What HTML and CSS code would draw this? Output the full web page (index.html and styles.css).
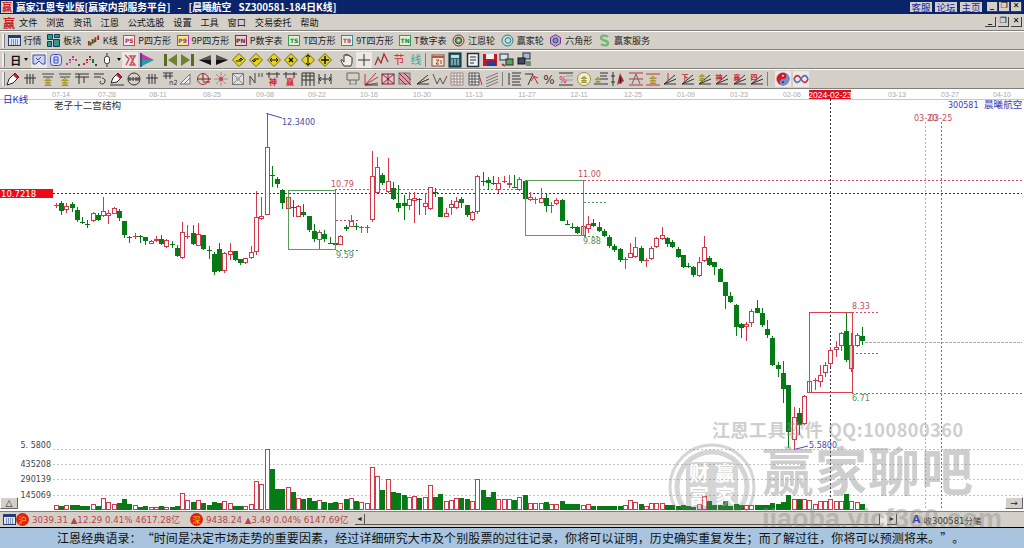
FILE: index.html
```html
<!DOCTYPE html>
<html lang="zh-CN">
<head>
  <meta charset="UTF-8">
  <title>赢家江恩专业版</title>
  <link rel="stylesheet" href="styles.css">
</head>
<body>
<svg class="defs" width="0" height="0">
  <symbol id="dia" viewBox="0 0 16 16"><path d="M8 1.5l6.5 6.5-6.5 6.5-6.5-6.5z" fill="#e6d422" stroke="#6d6a10"/></symbol>
  <symbol id="grate" viewBox="0 0 16 16"><path d="M2 7h12M5 3v10M8 3v10M11 3v10" stroke="#333" fill="none"/></symbol>
  <symbol id="fan" viewBox="0 0 16 16"><path d="M2 13h12M2 13l11-9M2 13l12-5" stroke="#333" fill="none"/></symbol>
</svg>
<div class="app">
  <div class="titlebar">
    <b class="logo-small">赢</b>
    <span class="title">赢家江恩专业版[赢家内部服务平台] - [晨曦航空 SZ300581-184日K线]</span>
    <span class="links"><a>客服</a><a>论坛</a><a>主页</a></span>
    <span class="winbtns"><i>_</i><i>❐</i><i>✕</i></span>
  </div>
  <div class="menubar">
    <b class="logo-menu">赢</b>
    <span>文件</span><span>浏览</span><span>资讯</span><span>江恩</span><span>公式选股</span><span>设置</span><span>工具</span><span>窗口</span><span>交易委托</span><span>帮助</span>
    <span class="winbtns inner"><i>_</i><i>❐</i><i>✕</i></span>
  </div>

  <div class="tools row1">
    <div class="grip"></div>
    <div class="tool"><svg class="ic13" viewBox="0 0 13 13"><rect x=".5" y="1.5" width="12" height="10" fill="#dfe6f5" stroke="#223a7a"/><path d="M1 3h11" stroke="#223a7a" stroke-width="2"/><path d="M3 6h7M3 8h7M3 10h7" stroke="#223a7a" stroke-dasharray="1 1"/></svg>行情</div>
    <div class="tool"><svg class="ic13" viewBox="0 0 13 13"><path d="M.5.5h5v5h-5zM7.5.5h5v3h-5zM.5 7.5h4v5h-4zM6.5 5.5h6v7h-6z" fill="#2f9a8a" stroke="#123a5a"/></svg>板块</div>
    <div class="tool"><svg class="ic13" viewBox="0 0 14 13"><path d="M2 7v5M6 5v5M9 3v5M12 1v5" stroke="#c02020" stroke-width="2"/><path d="M4 8v4M8 6v3" stroke="#108020" stroke-width="2"/></svg>K线</div>
    <div class="tool"><span class="tag red">PS</span>P四方形</div>
    <div class="tool"><span class="tag mag">P9</span>9P四方形</div>
    <div class="tool"><span class="tag dark">PN</span>P数字表</div>
    <div class="tool"><span class="tag grn">TS</span>T四方形</div>
    <div class="tool"><span class="tag teal">T9</span>9T四方形</div>
    <div class="tool"><span class="tag grn">TN</span>T数字表</div>
    <div class="tool"><svg class="ic13" viewBox="0 0 13 13"><circle cx="6.5" cy="6.5" r="5.5" fill="#d8c8b8" stroke="#8a3030"/><circle cx="6.5" cy="6.5" r="3.2" fill="#70a070" stroke="#205020"/><circle cx="6.5" cy="6.5" r="1.2" fill="#d8d8c8"/></svg>江恩轮</div>
    <div class="tool"><svg class="ic13" viewBox="0 0 13 13"><circle cx="6.5" cy="6.5" r="5.5" fill="#bfe0d8" stroke="#2c7a80"/><circle cx="7" cy="6.5" r="2.8" fill="none" stroke="#2c7a80"/></svg>赢家轮</div>
    <div class="tool"><svg class="ic13" viewBox="0 0 13 13"><path d="M6.5.7l5 2.9v5.8l-5 2.9-5-2.9V3.6z" fill="#c8a0d8" stroke="#803090"/><circle cx="6.5" cy="6.5" r="2.5" fill="#60a0b0" stroke="#305070"/></svg>六角形</div>
    <div class="tool"><svg class="ic13" viewBox="0 0 13 13"><path d="M10 3C8 1 3 1 3 4s7 2 7 5-5 3-7 1" fill="none" stroke="#70b870" stroke-width="2.4"/></svg>赢家服务</div>
  </div>

  <div class="tools row2">
    <div class="grip"></div>
    <b class="period">日</b><span class="drop"></span>
    <svg class="ic hi first" viewBox="0 0 16 16"><path d="M2 3h12v9h-3l-3-3-3 3H2z" fill="#c8d4f0" stroke="#3a50b0"/><path d="M5 6l2 2 3-3" stroke="#3a50b0" fill="none"/></svg>
    <svg class="ic" viewBox="0 0 16 16"><rect x="2.500" y="2.500" width="11" height="11" rx="3" fill="#d8e0f8" stroke="#4050c0"/><path d="M6 5h4v6H6zM6 8h4" stroke="#4050c0" fill="none"/></svg>
    <svg class="ic" viewBox="0 0 16 16"><path d="M2 11v3M5 7v4M8 4v4M11 7v3" stroke="#b040a0" stroke-width="2" stroke-dasharray="2 1"/><path d="M13 12h2v2h-2z" fill="#406030"/></svg>
    <svg class="ic" viewBox="0 0 16 16"><path d="M2 11v3M5 7v4M8 4v4" stroke="#c02040" stroke-width="2" stroke-dasharray="2 1"/><path d="M11 7v4" stroke="#207030" stroke-width="2"/><path d="M13 12h2v2h-2z" fill="#404040"/></svg>
    <svg class="ic" viewBox="0 0 16 16"><path d="M8 1v14" stroke="#333"/><rect x="5.500" y="4.500" width="5" height="7" rx="2" fill="#fff" stroke="#333"/></svg>
    <span class="drop tight"></span>
    <svg class="ic hi" viewBox="0 0 16 16"><path d="M3 3l4 4-3 6M8 4h5l-3 5 3 4H8l3-5z" fill="none" stroke="#d05060" stroke-width="1.500"/></svg>
    <svg class="ic" viewBox="0 0 16 16"><path d="M2 1v14" stroke="#405080" stroke-width="2"/><path d="M3 2l12 6H3z" fill="#d030b0"/><path d="M3 8h12L3 14z" fill="#20a0a0"/></svg>
    <span class="gap s5"></span>
    <svg class="ic" viewBox="0 0 16 16"><path d="M2 2h3v12H2z" fill="#5a6a20"/><path d="M15 2v12L6 8z" fill="#6f8230"/></svg>
    <svg class="ic" viewBox="0 0 16 16"><path d="M1 2v12l9-6z" fill="#6f8230"/><path d="M11 2h3v12h-3z" fill="#5a6a20"/></svg>
    <svg class="ic" viewBox="0 0 16 16"><path d="M14 3v10L2 8z" fill="#555"/><path d="M14 8v5L2 8z" fill="#111"/></svg>
    <svg class="ic" viewBox="0 0 16 16"><path d="M2 3v10l12-5z" fill="#111"/><path d="M2 3v5h12z" fill="#555"/></svg>
    <svg class="ic" viewBox="0 0 16 16"><use href="#dia"/><path d="M5 9h5V6M8 8l2-2 2 2" stroke="#111" fill="none"/></svg>
    <svg class="ic" viewBox="0 0 16 16"><use href="#dia"/><path d="M11 7H6v3M4 8l2 2 2-2" stroke="#111" fill="none"/></svg>
    <svg class="ic" viewBox="0 0 16 16"><use href="#dia"/><path d="M4 8h8M6 6L4 8l2 2M10 6l2 2-2 2" stroke="#111" fill="none"/></svg>
    <svg class="ic" viewBox="0 0 16 16"><use href="#dia"/><path d="M6 6l4 4M10 6l-4 4" stroke="#111" stroke-width="1.500"/></svg>
    <svg class="ic" viewBox="0 0 16 16"><use href="#dia"/><path d="M8 3v10M6 5l2-2 2 2M6 11l2 2 2-2" stroke="#111" fill="none"/></svg>
    <svg class="ic" viewBox="0 0 16 16"><use href="#dia"/><path d="M4 8h8M8 4v8" stroke="#111" stroke-width="1.500"/></svg>
    <span class="gap s4"></span>
    <svg class="ic" viewBox="0 0 16 16"><path d="M5 14c-2-3-3-5-3-6s2 0 3 2V4c0-2 2-2 2 0V3c0-1 2-1 2 0v1c0-1 2-1 2 0v1c1-1 2 0 2 1v4c0 2-1 3-1 4z" fill="#f4f0e8" stroke="#333"/></svg>
    <svg class="ic hi" viewBox="0 0 16 16"><path d="M8 2v12M2 8h12" stroke="#333"/></svg>
    <svg class="ic" viewBox="0 0 16 16"><path d="M1 13l3-7 3 5 3-9 4 8" fill="none" stroke="#c02030" stroke-width="1.300"/><circle cx="4" cy="6" r="1.200" fill="#20a040"/></svg>
    <svg class="ic" viewBox="0 0 16 16"><text x="8" y="12" class="glyph light red">节</text></svg>
    <svg class="ic" viewBox="0 0 16 16"><text x="8" y="12" class="glyph light teal">线</text></svg>
    <span class="gap s4 line"></span>
    <svg class="ic" viewBox="0 0 16 16"><rect x="2" y="3" width="12" height="11" fill="#f4e4d0" stroke="#705040"/><path d="M2 5h12" stroke="#c05040" stroke-width="2"/><path d="M6 8h3l-3 4h3M11 8v4" stroke="#a04030" fill="none"/></svg>
    <svg class="ic" viewBox="0 0 16 16"><rect x="2" y="1" width="12" height="14" fill="#20606a" stroke="#102030"/><path d="M4 3h8v3H4z" fill="#bfe0d8"/><path d="M4 8h2M7 8h2M10 8h2M4 10h2M7 10h2M10 10h2M4 12h2M7 12h2M10 12h2" stroke="#d8e8e0"/></svg>
    <svg class="ic" viewBox="0 0 16 16"><rect x="2.500" y="1.500" width="11" height="13" fill="#eef0f0" stroke="#203040" stroke-width="1.500"/><path d="M5 5h6M5 8h6M5 11h4" stroke="#203040"/></svg>
    <svg class="ic" viewBox="0 0 16 16"><path d="M1 2h14v12H1z" fill="#c01828"/><path d="M4 2h8v5H4z" fill="#f0f0f0"/><path d="M5 9h9v5H5z" fill="#2040a0"/></svg>
    <svg class="ic" viewBox="0 0 16 16"><rect x="1" y="2" width="8" height="6" fill="#d8e0e8" stroke="#203050"/><rect x="7" y="7" width="7" height="6" fill="#60a060" stroke="#203020"/><path d="M3 12l3 2" stroke="#b03030" stroke-width="2"/></svg>
    <svg class="ic" viewBox="0 0 16 16"><rect x="7" y="1" width="7" height="6" fill="#b0b8c8" stroke="#203050"/><rect x="2" y="6" width="7" height="6" fill="#404860" stroke="#101020"/><path d="M10 9h5v5h-5z" fill="#709070"/></svg>
  </div>

  <div class="tools row3">
    <div class="grip"></div>
    <svg class="ic" viewBox="0 0 16 16"><path d="M2 14l2-6 6-6 4 4-6 6z" fill="#fff" stroke="#222"/><path d="M10 2l4 4-2 2-4-4z" fill="#c02030"/></svg>
    <svg class="ic"><use href="#grate"/></svg>
    <svg class="ic" viewBox="0 0 16 16"><path d="M2 3h12M3 6h10" stroke="#444"/><text x="8" y="14" class="glyph gold small">金</text></svg>
    <svg class="ic" viewBox="0 0 16 16"><path d="M2 3h12M3 6h10" stroke="#444"/><text x="8" y="14" class="glyph gold small">金</text></svg>
    <svg class="ic" viewBox="0 0 16 16"><path d="M1 3h14M1 6h14M5 3v10M10 6v6" stroke="#333" fill="none"/></svg>
    <svg class="ic" viewBox="0 0 16 16"><path d="M2 3h10M2 6h7M10 7c4 0 4 6 0 6-2 0-3-2-1-3" stroke="#333" fill="none"/></svg>
    <svg class="ic" viewBox="0 0 16 16"><path d="M2 12l2-5 5-5 4 4-5 5z" fill="#fff" stroke="#222"/><path d="M9 2l4 4-2 2-4-4z" fill="#c02030"/><path d="M1 14h14" stroke="#333"/></svg>
    <svg class="ic" viewBox="0 0 16 16"><circle cx="8" cy="8" r="6" fill="none" stroke="#333"/><path d="M2 8h12M4 6v4M7 6v4M10 6v4M12 6v4" stroke="#333"/></svg>
    <svg class="ic"><use href="#grate"/></svg>
    <svg class="ic" viewBox="0 0 16 16"><path d="M2 2h10M2 5h10M5 2v6M9 2v6" stroke="#333" fill="none"/><text x="8" y="14" class="tiny">n2</text></svg>
    <svg class="ic" viewBox="0 0 16 16"><path d="M2 13L12 3v10zM6 13l6-6" fill="#eee" stroke="#777"/></svg>
    <svg class="ic" viewBox="0 0 16 16"><circle cx="7" cy="8" r="5.500" fill="none" stroke="#b03040"/><path d="M1 8h14M7 2v8M7 11h7" stroke="#802020"/></svg>
    <svg class="ic" viewBox="0 0 16 16"><path d="M8 1v14M1 8h14M3 3l10 10M13 3L3 13" stroke="#b08890"/><circle cx="8" cy="8" r="2" fill="#d04050"/></svg>
    <svg class="ic" viewBox="0 0 16 16"><rect x="2.500" y="2.500" width="11" height="11" fill="#ddd" stroke="#777"/><path d="M3 3l10 10M13 3L3 13" stroke="#888"/><rect x="6" y="6" width="4" height="4" fill="#aaa"/></svg>
    <svg class="ic" viewBox="0 0 16 16"><path d="M2 14V5l5 7V2M11 2v4M14 2v4" stroke="#444" fill="none"/></svg>
    <svg class="ic" viewBox="0 0 16 16"><path d="M1 3h14M4 1v6M12 1v6" stroke="#333"/><text x="8" y="14" class="glyph red small">神</text></svg>
    <svg class="ic" viewBox="0 0 16 16"><path d="M1 3h14M4 1v6M12 1v6" stroke="#333"/><text x="8" y="14" class="glyph red small">赢</text></svg>
    <svg class="ic" viewBox="0 0 16 16"><path d="M2 2h12v7H2zM2 5h12M6 2v13M10 2v13M2 9v6M14 9v6" stroke="#333" fill="none"/></svg>
    <svg class="ic" viewBox="0 0 16 16"><path d="M2 3v10M8 3v10M14 3v10M2 8h12M4 6L2 8l2 2M12 6l2 2-2 2" stroke="#333" fill="none"/></svg>
    <span class="gap s10"></span>
    <svg class="ic" viewBox="0 0 16 16"><path d="M2 2h12v7H2zM5 9v5M11 9v5" fill="none" stroke="#666"/><path d="M4 13h8" stroke="#999"/></svg>
    <svg class="ic" viewBox="0 0 16 16"><path d="M2 14L13 2M2 14L15 6M2 14l13-2M2 14V3" stroke="#c03040" fill="none"/><path d="M2 14h13" stroke="#333"/></svg>
    <svg class="ic" viewBox="0 0 16 16"><rect x="2" y="3" width="12" height="10" fill="#e8c8d0" stroke="#802030"/><path d="M2 3l12 10M14 3L2 13M8 3v10" stroke="#802030"/></svg>
    <svg class="ic" viewBox="0 0 16 16"><rect x="2" y="2" width="11" height="11" fill="#d8a0a8" stroke="#777"/><path d="M2 2l12 12M2 7l7 7M7 2l7 7" stroke="#902030"/></svg>
    <svg class="ic"><use href="#fan"/></svg>
    <svg class="ic" viewBox="0 0 16 16"><path d="M1 3l4 10 3-6 3 6 4-8" stroke="#555" fill="none"/></svg>
    <svg class="ic" viewBox="0 0 16 16"><path d="M2 2h12v12H2zM2 5h12M2 8h12M2 11h12M5 2v12M8 2v12M11 2v12" stroke="#a08888" fill="#eee"/></svg>
    <svg class="ic" viewBox="0 0 16 16"><path d="M2 2h10v12H2zM2 5h10M2 8h10M2 11h10M5 2v12M8 2v12" stroke="#555" fill="#eee"/><path d="M12 4l3 10" stroke="#c03040"/></svg>
    <svg class="ic" viewBox="0 0 16 16"><path d="M2 7l12-5M2 10l12-5M2 13l12-5M2 16l12-5" stroke="#777"/></svg>
    <span class="gap s3 line"></span>
    <svg class="ic" viewBox="0 0 16 16"><path d="M3 2v12M6 2h9M6 5h8M6 8h9M6 11h8M6 14h9" stroke="#333"/></svg>
    <svg class="ic" viewBox="0 0 16 16"><path d="M1 3h8L4 14" stroke="#333" fill="none"/><path d="M9 5l5 2M7 10l3-4 4 7" stroke="#d02030" fill="none"/></svg>
    <svg class="ic" viewBox="0 0 16 16"><text x="8" y="13" class="pct">%</text></svg>
    <svg class="ic" viewBox="0 0 16 16"><path d="M1 2h14M1 14h14" stroke="#333"/><path d="M8 5h7M8 9h7" stroke="#999"/><text x="5" y="12" class="pct red small">%</text></svg>
    <svg class="ic" viewBox="0 0 16 16"><circle cx="8" cy="8" r="6.500" fill="#f0f0d8" stroke="#a09040"/><text x="8" y="11" class="glyph gold tiny2">金</text></svg>
    <svg class="ic" viewBox="0 0 16 16"><path d="M1 13h14M7 2h8M7 5h7M7 8h8" stroke="#333"/><text x="5" y="12" class="glyph gold tiny2">金</text></svg>
    <svg class="ic" viewBox="0 0 16 16"><path d="M3 1v14M1 5h4M1 11h4" stroke="#333"/><path d="M7 14l3-12 4 8z" fill="#c02030"/><path d="M10 6l1 7" stroke="#222"/></svg>
    <svg class="ic" viewBox="0 0 16 16"><path d="M1 2h14M1 14h14M1 8h14" stroke="#c03040"/><path d="M4 13l4-10 4 10" stroke="#666" fill="none"/></svg>
    <svg class="ic" viewBox="0 0 16 16"><path d="M1 3h14M1 14h14" stroke="#c03040"/><text x="8" y="12" class="glyph gold small">金</text></svg>
    <svg class="ic" viewBox="0 0 16 16"><use href="#fan"/><path d="M6 2v8" stroke="#c03040"/></svg>
    <svg class="ic" viewBox="0 0 16 16"><use href="#fan"/><text x="5" y="9" class="glyph red tiny2">下</text></svg>
    <svg class="ic" viewBox="0 0 16 16"><use href="#fan"/><text x="5" y="9" class="glyph gold tiny2">金</text></svg>
    <svg class="ic" viewBox="0 0 16 16"><use href="#fan"/><text x="5" y="9" class="glyph red tiny2">神</text></svg>
    <svg class="ic" viewBox="0 0 16 16"><use href="#fan"/><text x="5" y="9" class="glyph red tiny2">赢</text></svg>
    <svg class="ic" viewBox="0 0 16 16"><use href="#fan"/><text x="5" y="9" class="glyph red tiny2">四</text></svg>
    <span class="gap s8 line"></span>
    <svg class="ic hi" viewBox="0 0 16 16"><circle cx="8" cy="8" r="6.500" fill="#d81828"/><path d="M8 1.500a6.500 6.500 0 0 1 0 13 3.250 3.250 0 0 1 0-6.500 3.250 3.250 0 0 0 0-6.500z" fill="#7090c8"/><circle cx="8" cy="4.700" r="1" fill="#fff"/><circle cx="8" cy="11.300" r="1" fill="#203060"/></svg>
    <svg class="ic hi" viewBox="0 0 16 16"><path d="M1 8c2-5 5-4 7 0s5 5 7 0" fill="none" stroke="#c03050" stroke-width="1.600"/><path d="M1 8c2 5 5 4 7 0s5-5 7 0" fill="none" stroke="#5070c0" stroke-width="1.600"/></svg>
  </div>

  <div class="chart-wrap">
    <svg id="chart" class="chart" viewBox="0 89 1024 422" width="1024" height="422">
      <path class="rule" d="M0 99.500H1024"/>
      <g class="dates">
        <text x="61" y="97">07-14</text><text x="107" y="97">07-28</text><text x="158" y="97">08-11</text><text x="212" y="97">08-25</text><text x="265" y="97">09-08</text><text x="317" y="97">09-22</text><text x="369" y="97">10-16</text><text x="422" y="97">10-30</text><text x="474" y="97">11-13</text><text x="527" y="97">11-27</text><text x="579" y="97">12-11</text><text x="633" y="97">12-25</text><text x="686" y="97">01-09</text><text x="739" y="97">01-23</text><text x="792" y="97">02-06</text><text x="897" y="97">03-13</text><text x="950" y="97">03-27</text><text x="1002" y="97">04-10</text>
      </g>
      <rect x="809" y="90" width="42" height="9" fill="#e01020"/>
      <text x="830" y="98" class="date-hi">2024-02-23</text>
      <text x="3" y="103" class="kind">日K线</text>
      <text x="54" y="109" class="struct">老子十二宫结构</text>
      <text x="948" y="108" class="stock">300581</text><text x="984" y="108" class="stock cjk">晨曦航空</text>

      <!-- 水平虚线 -->
      <path class="d dark" d="M53 193.500H1022"/>
      <path class="d pink" d="M335 189.500H526M584 180.500H1022M336 220.500H360M852 312.500H878M852 353.500H878"/>
      <path class="d leaf" d="M336 250.500H360M584 202.500H608M584 236.500H600M852 393.500H1022"/>
      <path class="d grey" d="M865 342.500H1022"/>
      <path class="d dots" d="M53 449.500H1022M53 464.500H1022M53 479.500H1022M53 495.500H1022"/>
      <path class="d dark" d="M830.500 99V510"/>
      <path class="d sky" d="M925.500 122V510"/>
      <path class="d pink" d="M941.500 122V510"/>
      <g id="candles"></g>

      <!-- 方框和标注 -->
      <rect class="box leaf-box" x="288.500" y="190.500" width="47" height="59"/>
      <rect class="box leaf-box" x="525.500" y="180.500" width="58" height="55"/>
      <rect class="box red-box" x="809.500" y="312.500" width="43" height="80"/>
      <path class="ptr" d="M266.500 113.500L282 118M794 449.500L808 446"/>
      <text x="282" y="125" class="mark">12.3400</text>
      <text x="809" y="448" class="mark">5.5800</text>
      <text x="331" y="187" class="note">10.79</text>
      <text x="578" y="177" class="note">11.00</text>
      <text x="852" y="309" class="note">8.33</text>
      <text x="336" y="258" class="note g">9.59</text>
      <text x="583" y="244" class="note g">9.88</text>
      <text x="852" y="401" class="note g">6.71</text>
      <text x="914" y="121" class="note">03-20</text>
      <text x="929" y="121" class="note">03-25</text>

      <rect x="0" y="189" width="53" height="9" fill="#ee0a14"/>
      <text x="1" y="197" class="price">10.7218</text>
      <g class="vol-labels">
        <text x="51" y="448">5. 5800</text><text x="51" y="467">435208</text><text x="51" y="482">290139</text><text x="51" y="498">145069</text>
      </g>
    </svg>
    <div class="zoom-btn left">△</div>
    <div class="zoom-btn right">→</div>
  </div>

  <div class="statusbar">
    <svg class="ic13 calc" viewBox="0 0 13 13"><rect x=".5" y="1.500" width="12" height="10" fill="#dfe6f5" stroke="#223a7a"/><path d="M1 3h11" stroke="#223a7a" stroke-width="2"/><path d="M3 6h7M3 8h7M3 10h7" stroke="#223a7a" stroke-dasharray="1 1"/></svg>
    <span class="seal">沪</span>
    <span class="quote-num w-sh">3039.31 ▲12.29 0.41% 4617.28亿</span>
    <span class="seal">深</span>
    <span class="quote-num w-sz">9438.24 ▲3.49 0.04% 6147.69亿</span>
    <div class="scroll">
      <span class="sb-btn">◂</span><span class="sb-thumb"></span><span class="sb-track"></span><span class="sb-btn">▸</span>
    </div>
    <div class="status-right"><b class="a-mark">A</b>收300581分笔</div>
  </div>
  <div class="quotebar">江恩经典语录：<span class="wq">“</span>时间是决定市场走势的重要因素，经过详细研究大市及个别股票的过往记录，你将可以证明，历史确实重复发生；而了解过往，你将可以预测将来。<span class="wq">”</span>。</div>

  <!-- 水印 -->
  <div class="wm wm-qq">江恩工具软件 QQ:100800360</div>
  <div class="wm wm-name">赢家聊吧</div>
  <div class="wm wm-url">jiaoba.yjcf360.com</div>
  <svg class="wm wm-logo" viewBox="0 0 90 90" width="90" height="90">
    <circle cx="45" cy="45" r="42" fill="none" stroke="#777" stroke-width="3"/>
    <circle cx="45" cy="45" r="35" fill="none" stroke="#777" stroke-width="5"/>
    <rect x="19" y="20" width="52" height="50" rx="8" fill="#777"/>
    <text x="32" y="39" class="wm-glyph">财</text><text x="58" y="39" class="wm-glyph">赢</text>
    <text x="32" y="62" class="wm-glyph">富</text><text x="58" y="62" class="wm-glyph">家</text>
  </svg>
</div>
<script src="chart.js"></script>
</body>
</html>
```
FILE: styles.css
```css
html, body {
  margin: 0;
  padding: 0;
  overflow: hidden;
}
body {
  font-family: "Noto Sans CJK SC", "Liberation Sans", sans-serif;
  font-size: 10px;
  color: #222;
  background: #d4d0c8;
}
.defs { position: absolute; }

.app {
  position: relative;
  width: 1024px;
  height: 548px;
  display: flex;
  flex-direction: column;
  overflow: hidden;
}

/* title */
.titlebar {
  height: 14px;
  background: #0a246a;
  color: #fff;
  display: flex;
  align-items: center;
  flex: none;
  line-height: 12px;
}
.logo-small {
  width: 12px;
  margin: 0 3px 0 1px;
  background: #d4d0c8;
  color: #d01818;
  font-size: 10px;
  line-height: 12px;
  text-align: center;
}
.title {
  font-weight: 700;
  font-size: 9.800px;
  word-spacing: 5px;
  white-space: pre;
}
.links {
  margin-left: auto;
  display: flex;
  gap: 3px;
}
.links a {
  width: 22px;
  height: 10px;
  background: #d4d0c8;
  color: #2020b0;
  font-size: 9.500px;
  line-height: 10px;
  text-align: center;
}
.winbtns {
  display: flex;
  gap: 1px;
  margin: 0 2px 0 5px;
}
.winbtns i {
  width: 11px;
  height: 10px;
  background: #d4d0c8;
  border-right: 1px solid #404040;
  border-bottom: 1px solid #404040;
  box-sizing: border-box;
  color: #000;
  font: bold 8px/8px "DejaVu Sans", sans-serif;
  text-align: center;
}

/* menu */
.menubar {
  height: 17px;
  flex: none;
  display: flex;
  align-items: center;
  gap: 8.800px;
  padding-left: 3px;
  box-sizing: border-box;
  border-bottom: 1px solid #808080;
  font-size: 9.200px;
  color: #111;
}
.logo-menu {
  width: 12px;
  margin-right: -4.800px;
  color: #c81818;
  font-size: 12px;
}
.winbtns.inner {
  margin-left: auto;
  gap: 2px;
}

/* tool rows */
.tools {
  flex: none;
  display: flex;
  align-items: center;
  box-sizing: border-box;
  border-top: 1px solid #fff;
  border-bottom: 1px solid #808080;
}
.row1 { height: 19px; gap: 5.600px; font-size: 9px; }
.row2 { height: 19px; gap: 1.200px; }
.row3 { height: 20px; gap: 1.350px; }
.grip {
  width: 2px;
  height: 14px;
  margin-left: 2px;
  background: #eee;
  border-right: 1px solid #808080;
  flex: none;
}
.row1 .grip { margin-right: -3px; }
.row3 .grip { margin-right: -1.400px; }

.tool {
  display: flex;
  align-items: center;
  gap: 3px;
  white-space: nowrap;
}
.ic13 {
  width: 13px;
  height: 13px;
  flex: none;
}
.tag {
  width: 12px;
  height: 11px;
  box-sizing: border-box;
  border: 1px solid;
  background: #eee;
  font: bold 6px/9px "DejaVu Sans", sans-serif;
  text-align: center;
}
.tag.red { border-color: #c05050; color: #c03030; }
.tag.mag { border-color: #c030c0; color: #a030a0; background: #f4e880; }
.tag.dark { border-color: #803040; color: #702030; background: #e8d0d8; }
.tag.grn { border-color: #30a050; color: #208040; background: #e0f0d0; }
.tag.teal { border-color: #309090; color: #c04040; background: #e0f0e8; }

.ic {
  width: 16px;
  height: 16px;
  flex: none;
}
.ic.hi { background: #ece9e2; }
.period {
  margin-left: 4px;
  width: 11px;
  font-size: 11px;
  color: #111;
}
.drop {
  width: 0;
  height: 0;
  margin: 0 1px 0 2px;
  border: 2px solid transparent;
  border-top: 3px solid #111;
  border-bottom: 0;
  flex: none;
}
.drop.tight { margin: 0; }
.gap { flex: none; height: 14px; }
.gap.line { border-left: 1px solid #808080; box-sizing: border-box; }
.s3 { width: 3.500px; }
.s4 { width: 3.800px; }
.s5 { width: 5.200px; }
.s8 { width: 7.600px; }
.s10 { width: 9.600px; }

.glyph { font: 700 12px "Noto Sans CJK SC", sans-serif; text-anchor: middle; }
.glyph.light { font-size: 11px; font-weight: 400; }
.glyph.small { font-size: 8px; }
.glyph.tiny2 { font-size: 7px; }
.glyph.red { fill: #d02030; }
.glyph.teal { fill: #40a090; }
.glyph.gold { fill: #a09020; }
.tiny { font: 7px "DejaVu Sans", sans-serif; fill: #333; }
.pct { font: 12px "DejaVu Sans", sans-serif; text-anchor: middle; fill: #333; }
.pct.red { fill: #d02030; }
.pct.small { font-size: 8px; }

/* chart */
.chart-wrap {
  height: 422px;
  flex: none;
  position: relative;
  background: #fff;
}
.chart { display: block; }
.chart text { font-family: "DejaVu Sans", sans-serif; font-size: 8px; }
.rule { stroke: #c8c8c8; fill: none; }
.chart .dates text {
  font: 7px "Liberation Sans", sans-serif;
  fill: #aaa;
  text-anchor: middle;
}
.chart .date-hi {
  fill: #fff;
  text-anchor: middle;
  font-family: "Liberation Sans", sans-serif;
  font-size: 8.500px;
}
.chart .kind { font-family: "Noto Sans CJK SC", sans-serif; font-size: 9.500px; fill: #2a30c0; }
.chart .struct { font-family: "Noto Sans CJK SC", sans-serif; font-size: 9.600px; fill: #333; }
.chart .stock { fill: #3a3ab0; }
.chart .stock.cjk { font-family: "Noto Sans CJK SC", sans-serif; font-size: 9.600px; }
.d { fill: none; stroke-dasharray: 2 2; }
.dark { stroke: #333; }
.pink { stroke: #d84a5a; }
.leaf { stroke: #4a9a5a; }
.grey { stroke: #aaa; stroke-dasharray: 3 1; }
.dots { stroke: #c4c4c4; }
.sky { stroke: #90c0d8; }
.box { fill: none; }
.leaf-box { stroke: #5a9a5a; }
.red-box { stroke: #d84050; }
.ptr { fill: none; stroke: #4a4ab0; }
.chart .mark { fill: #4a4ab0; }
.chart .note { fill: #c85060; }
.chart .note.g { fill: #5a8a5a; }
.chart .price { fill: #fff; font-size: 8.500px; }
.vol-labels text {
  fill: #444;
  text-anchor: end;
}
.zoom-btn {
  position: absolute;
  bottom: 2px;
  width: 18px;
  height: 12px;
  background: #d4d0c8;
  border-top: 1px solid #fff;
  border-left: 1px solid #fff;
  border-right: 1px solid #666;
  border-bottom: 1px solid #666;
  box-sizing: border-box;
  font: 9px/10px "DejaVu Sans", sans-serif;
  text-align: center;
  color: #222;
}
.zoom-btn.left { left: 0; }
.zoom-btn.right { right: 1px; }

/* bottom */
.statusbar {
  height: 17px;
  flex: none;
  display: flex;
  align-items: center;
  box-sizing: border-box;
  border-top: 1px solid #808080;
  border-bottom: 1px solid #000;
  font: 8.700px "DejaVu Sans", "Noto Sans CJK SC", sans-serif;
}
.calc { margin-left: 3px; }
.seal {
  width: 13px;
  height: 13px;
  border-radius: 50%;
  background: #e02010;
  color: #fc0;
  font: 8px/13px "Noto Sans CJK SC", sans-serif;
  text-align: center;
  flex: none;
}
.quote-num {
  color: #c04048;
  margin-left: 3px;
  white-space: nowrap;
}
.w-sh { width: 158px; }
.w-sz { width: 146px; }
.scroll {
  margin-left: 3px;
  width: 542px;
  height: 11px;
  display: flex;
  background: #e8e6e0;
}
.sb-btn {
  width: 10px;
  background: #d4d0c8;
  border-right: 1px solid #555;
  border-bottom: 1px solid #555;
  box-sizing: border-box;
  font: 8px/9px "DejaVu Sans", sans-serif;
  text-align: center;
}
.sb-thumb {
  width: 515px;
  background: #d4d0c8;
  border-right: 1px solid #555;
  border-bottom: 1px solid #555;
  box-sizing: border-box;
}
.sb-track { flex: 1; }
.status-right {
  margin-left: 15px;
  display: flex;
  align-items: center;
  gap: 3px;
  color: #333;
  font-size: 8.500px;
  white-space: nowrap;
}
.a-mark { color: #3040b0; font-size: 11px; line-height: 12px; }
.quotebar {
  height: 20px;
  flex: none;
  background: #a8c4de;
  font-size: 12px;
  letter-spacing: .1px;
  line-height: 20px;
  padding-left: 57px;
  color: #111;
  white-space: nowrap;
}
.wq {
  display: inline-block;
  width: 12px;
  text-align: right;
}

/* watermark */
.wm {
  position: absolute;
  pointer-events: none;
  white-space: nowrap;
  color: #8c8c8c;
  opacity: .42;
}
.wm-qq {
  left: 712px;
  top: 417px;
  font: 700 18px/24px "Noto Sans CJK SC", "Liberation Sans", sans-serif;
  letter-spacing: .55px;
}
.wm-name {
  left: 762px;
  top: 435px;
  font: 700 52px/68px "Noto Sans CJK SC", sans-serif;
  letter-spacing: 1px;
}
.wm-url {
  left: 762px;
  top: 503px;
  font: 700 27px/32px "Liberation Sans", sans-serif;
  clip-path: inset(0 0 8px 0);
}
.wm-logo {
  left: 667px;
  top: 442px;
  clip-path: inset(0 0 20px 0);
  opacity: .3;
}
.wm-glyph {
  font: 700 20px "Noto Sans CJK SC", sans-serif;
  text-anchor: middle;
  fill: #fff;
}
```
FILE: chart.js
```js
// y values were read off 3x crops, so every row is y*3 from its base line
// kind, high, body top, body bottom, low  (top == bottom means a cross)
const parts = [
  { base: 100, rows: [
    'r 310 315 315 325','g 302 308 332 345','r 310 317 331 340','g 305 311 325 335','g 322 331 361 365',
    'g 352 365 365 372','g 360 372 372 383','r 335 338 362 365','g 338 345 361 362','r 292 334 349 350',
    'r 330 339 349 372','r 322 325 341 342','g 328 333 354 362','g 364 364 406 415','g 408 412 412 430',
    'r 400 408 408 418','g 406 408 408 428','g 412 412 424 435','r 420 422 432 433','r 408 418 424 425',
    'g 406 417 432 435','r 417 419 442 444','g 424 431 431 445','g 435 443 467 470','r 367 397 475 476',
    'r 376 408 408 417','g 376 398 432 436','r 370 401 437 438','g 405 405 447 450','g 437 449 449 478',
    'g 455 461 515 525','g 430 447 513 515','r 455 459 512 520','r 430 454 464 480','g 452 454 481 483',
    'g 477 477 488 495','r 473 475 490 491','r 438 457 475 477','r 273 351 456 465','r 290 347 356 360',
    'r 40 141 345 346','g 197 225 225 262','g 232 236 252 263','g 267 271 309 328','r 290 292 326 328',
    'g 300 322 322 350','r 316 318 350 351','g 312 336 345 352','g 348 348 390 395','g 372 394 418 425',
    'r 390 397 421 448','g 390 403 417 425','g 412 428 428 432','g 415 428 436 445','r 406 408 434 435',
    'g 375 380 388 392','r 346 362 380 381','g 368 378 378 390'
  ] },
  { base: 140, rows: [
    'r 258 262 262 280','r 255 262 262 278','r 32 107 240 245','r 50 82 158 160','g 100 105 130 135',
    'r 55 122 155 160','g 125 143 177 180','g 135 190 205 215','g 165 188 197 240','r 155 177 198 210',
    'r 155 175 184 250','g 175 177 177 225','r 160 190 200 225','r 140 142 207 210','g 145 156 156 172',
    'g 170 172 230 232','r 203 218 230 232','r 180 193 203 225','r 170 184 203 208','g 170 178 190 205',
    'g 195 195 226 232','r 212 217 240 243','r 105 107 217 222','g 95 122 122 138','g 110 120 130 150',
    'g 107 130 130 135','r 110 128 150 160','r 108 123 123 130','r 105 128 134 145','g 105 140 140 145',
    'r 112 116 150 153','g 120 122 177 180','r 155 172 180 183','r 170 176 176 193','r 145 175 188 190',
    'g 160 175 198 215','r 185 195 195 220','r 175 180 193 195','g 177 179 242 244','g 240 252 252 256',
    'g 250 261 261 268','g 258 260 280 282','r 256 258 287 288','r 228 251 266 280','g 237 250 258 260',
    'g 245 260 272 275','g 268 273 288 290','g 285 292 318 325','g 312 319 330 335','g 325 328 361 365',
    'r 350 358 358 388','r 310 340 353 355','r 292 320 350 355','g 318 323 362 368','r 355 360 360 380',
    'r 318 325 357 360','r 290 295 322 325','r 260 284 297 300','g 290 293 313 320','g 300 306 322 325',
    'g 320 327 350 355','g 344 346 382 385','g 370 378 378 383','g 379 381 405 410'
  ] },
  { base: 230, rows: [
    'r 80 96 139 140','r 18 50 92 95','g 78 85 105 108','g 95 97 110 135','g 115 117 155 157',
    'g 155 157 197 238','g 185 198 217 219','g 222 224 290 318','g 280 282 294 325','r 275 281 290 332',
    'r 238 242 280 292','g 210 235 248 250','g 235 248 285 290','g 270 298 314 325','g 318 325 405 408',
    'g 395 405 418 440','g 392 428 477 520','g 464 466 607 655','r 532 562 630 658','g 535 550 585 615',
    'r 495 498 581 585','r 452 454 488 489','r 445 450 450 480','r 405 436 457 472','r 395 405 430 440',
    'r 352 360 401 412','r 332 352 361 382','r 305 308 348 362','g 248 304 390 395','r 310 346 418 425',
    'r 308 316 347 352','g 292 318 334 345'
  ] }
];

// volume heights, same 3x scale
const vols = [16,12,14,14,16,11,12,19,12,37,23,19,22,32,17,14,10,12,8,8,
  12,10,10,12,50,29,24,30,22,15,23,22,26,20,12,12,12,19,86,77,
  182,123,62,62,68,53,37,33,35,28,30,23,20,24,20,33,37,26,23,21,
  128,102,60,92,53,51,46,39,42,35,39,76,38,48,26,30,37,37,33,26,
  93,60,38,54,33,33,33,30,39,45,21,21,21,24,19,19,26,18,18,17,
  15,17,13,13,13,13,11,13,15,29,24,18,12,20,20,22,16,14,12,14,
  11,10,18,42,26,16,14,28,12,18,14,16,16,14,14,14,20,18,24,44,
  32,34,34,30,18,26,26,32,28,26,48,26,24,18];

const RED = '#d23a4c', GREEN = '#067a14';
const tinted = [44, 100, 151];   // these sit on a box edge and look pinkish

function bar(x, top, bottom, kind, i) {
  const h = Math.max(bottom - top, 1);
  if (kind === 'g') {
    return `<rect x="${x - 2}" y="${top}" width="5" height="${h}" fill="${GREEN}"/>`;
  }
  const fill = tinted.includes(i) ? '#eccfc4' : '#fff';
  return `<rect x="${x - 1.5}" y="${top + 0.5}" width="4" height="${h - 1}" fill="${fill}" stroke="${RED}"/>`;
}

let html = '';
let i = 0;
parts.forEach(part => {
  part.rows.forEach(row => {
    const bits = row.split(' ');
    const kind = bits[0];
    const [hi, top, bot, lo] = bits.slice(1).map(v => Math.round(v / 3 + part.base));
    const x = Math.round(55.7 + 5.27 * i);
    const color = kind === 'g' ? GREEN : RED;

    html += `<path d="M${x + 0.5} ${hi}V${lo}" stroke="${color}"/>`;
    if (top === bot) {
      html += `<path d="M${x - 2} ${top + 0.5}H${x + 3}" stroke="${color}"/>`;
    } else {
      html += bar(x, top, bot, kind, i);
    }
    // volume under the candle
    html += bar(x, 510 - Math.round(vols[i] / 3), 510, kind, -1);
    i++;
  });
});

document.getElementById('candles').innerHTML = html;
```
